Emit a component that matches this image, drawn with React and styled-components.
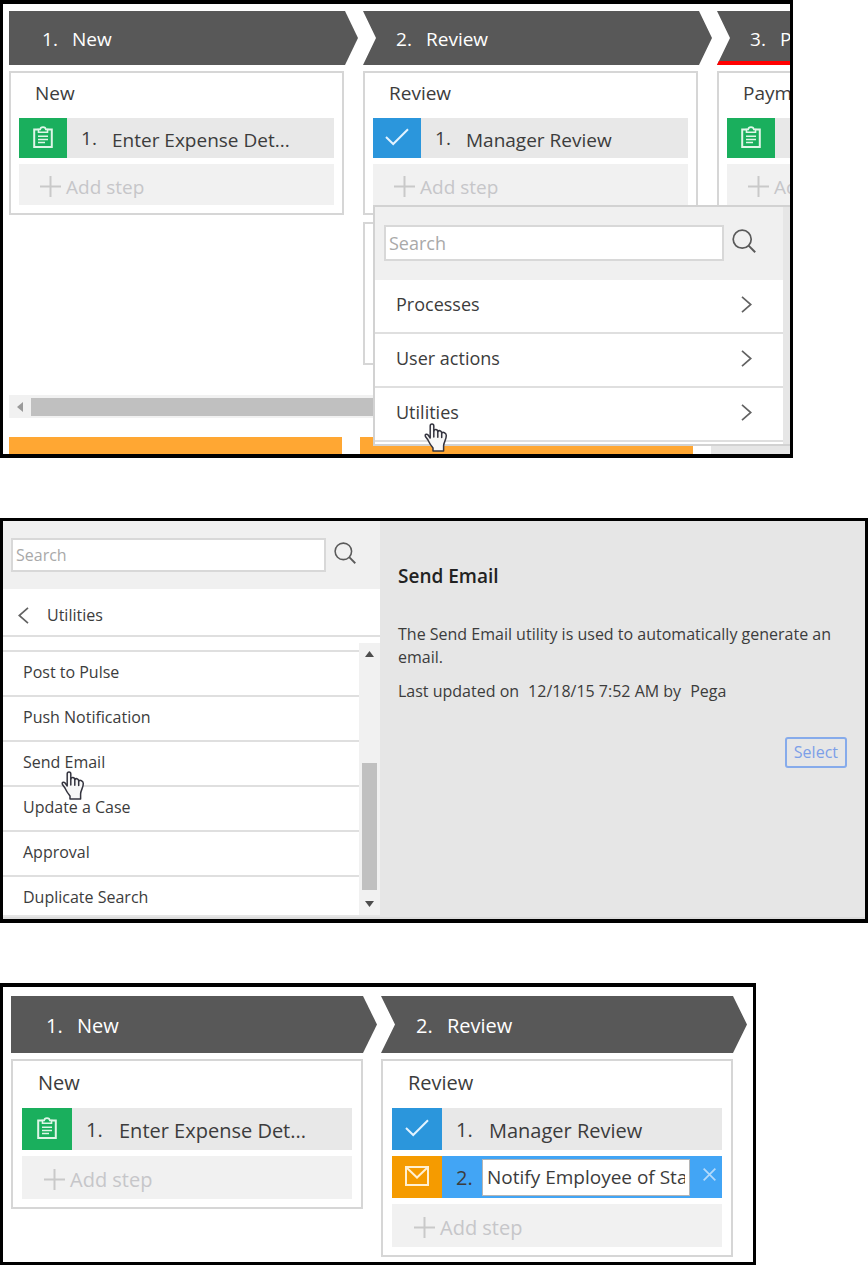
import React from "react";
import styled, { createGlobalStyle, ThemeProvider } from "styled-components";

const GlobalStyle = createGlobalStyle`
  *, *::before, *::after { box-sizing: border-box; }
  body {
    margin: 0;
    background: #fff;
    color: #3c3c3c;
    font-family: "Open Sans", "Noto Sans", sans-serif;
  }
  button, input { font: inherit; color: inherit; }
  button { margin: 0; padding: 0; border: 0; background: none; text-align: left; cursor: pointer; }
  h2, h3, p, ul, ol { margin: 0; padding: 0; font-weight: 400; }
  ul, ol { list-style: none; }
  svg { display: block; flex: none; }
`;

/* Two densities of the same stage board */
const compact = {
  font: 19, padX: 6, padY: 7, padBottom: 0, stage: 349, gap: 5, tip: 13, card: 335,
  head: 54, headPad: 33, headNum: 30, title: 45, titleLine: 41, titlePad: 16, cardPad: 8,
  icon: 48, step: 40, add: 41, stepGap: 6, numPad: 14, num: 31, addPad: 21,
};
const roomy = {
  font: 20, padX: 8, padY: 9, padBottom: 5, stage: 366, gap: 4, tip: 14, card: 352,
  head: 57, headPad: 35, headNum: 31, title: 47, titleLine: 44, titlePad: 16, cardPad: 9,
  icon: 50, step: 42, add: 43, stepGap: 6, numPad: 14, num: 33, addPad: 22,
};

const Page = styled.main`
  display: flex;
  flex-direction: column;
  gap: 60px;
`;

const Frame = styled.section`
  position: relative;
  width: 100%;
  max-width: ${(p) => p.$max || "none"};
  border: solid #000;
  border-width: ${(p) => p.$edges || "4px 3px"};
  background: #fff;
  overflow: hidden;
`;

/* ---------- stage board ---------- */

const Stages = styled.ol`
  display: flex;
  align-items: flex-start;
  gap: ${(p) => p.theme.gap}px;
  padding: ${(p) => p.theme.padY}px ${(p) => p.theme.padX}px ${(p) => p.theme.padBottom}px;
  font-size: ${(p) => p.theme.font}px;
`;

const Stage = styled.li`
  display: flex;
  flex-direction: column;
  flex: none;
  gap: 7px;
  width: ${(p) => p.theme.stage}px;
`;

const StageHead = styled.h2`
  display: flex;
  align-items: center;
  height: ${(p) => p.theme.head}px;
  margin-bottom: -1px;
  padding-left: ${(p) => p.theme.headPad}px;
  padding-top: 2px;
  background: #585858;
  color: #fff;
  font-size: inherit;
  box-shadow: ${(p) => (p.$alert ? "inset 0 -4px #f00" : "none")};
  clip-path: ${({ $notch, theme: { tip } }) =>
    `polygon(0 0, calc(100% - ${tip}px) 0, 100% 50%, calc(100% - ${tip}px) 100%, 0 100%${
      $notch ? `, ${tip}px 50%` : ""
    })`};
`;

const StageNumber = styled.span`
  width: ${(p) => p.theme.headNum}px;
`;

const Card = styled.div`
  display: flex;
  flex-direction: column;
  gap: ${(p) => p.theme.stepGap}px;
  width: ${(p) => p.theme.card}px;
  min-height: ${(p) => (p.$empty ? "143px" : "0")};
  padding: 0 ${(p) => p.theme.cardPad}px 8px;
  border: 2px solid #d6d6d6;
`;

const CardTitle = styled.h3`
  height: ${(p) => p.theme.title}px;
  margin-bottom: -${(p) => p.theme.stepGap}px;
  padding-left: ${(p) => p.theme.titlePad}px;
  font-size: inherit;
  line-height: ${(p) => p.theme.titleLine}px;
`;

const Step = styled.div`
  display: flex;
  align-items: center;
  height: ${(p) => p.theme.step}px;
  background: ${(p) => (p.$active ? "#42a5f5" : "#e8e8e8")};
`;

const StepIcon = styled.span`
  display: flex;
  align-items: center;
  justify-content: center;
  align-self: stretch;
  flex: none;
  width: ${(p) => p.theme.icon}px;
  padding-bottom: 2px;
  background: ${(p) => p.$color};
`;

const StepNumber = styled.span`
  flex: none;
  width: ${(p) => p.theme.num + p.theme.numPad}px;
  padding-left: ${(p) => p.theme.numPad}px;
`;

const StepName = styled.span`
  padding-top: 3px;
  white-space: nowrap;
`;

const StepInput = styled.input`
  flex: 1;
  min-width: 0;
  height: 37px;
  margin-left: -7px;
  padding: 0 4px;
  border: 1px solid #b5b5b5;
  border-radius: 0;
  background: #fff;
  font-size: 19px;
  outline: none;
`;

const RemoveButton = styled.button`
  display: flex;
  justify-content: center;
  width: 32px;
  padding: 0 0 5px 6px;
  flex: none;
`;

const AddStep = styled.button`
  display: flex;
  align-items: center;
  gap: 5px;
  height: ${(p) => p.theme.add}px;
  padding: 4px 0 0 ${(p) => p.theme.addPad}px;
  background: #f1f1f1;
  color: #c6c6c9;
  white-space: nowrap;
`;

/* ---------- horizontal scrollbar and lower bars ---------- */

const HScroll = styled.div`
  display: flex;
  align-items: center;
  height: 23px;
  margin: 30px 0 0 6px;
  background: #f1f1f1;
`;

const HArrow = styled.button`
  display: flex;
  justify-content: center;
  width: 22px;
`;

const HThumb = styled.div`
  flex: 1;
  height: 18px;
  background: #c0c0c0;
`;

const Bars = styled.div`
  display: flex;
  gap: 18px;
  margin: 19px 0 0 6px;
`;

const Bar = styled.div`
  flex: none;
  width: 333px;
  height: 17px;
  background: ${(p) => p.$color};
`;

/* ---------- step picker ---------- */

const Popup = styled.div`
  position: absolute;
  top: 201px;
  left: 370px;
  right: 0;
  display: flex;
  padding-right: 7px;
  border: solid #d2d2d2;
  border-width: 2px 0 2px 2px;
  background: #e6e6e6;
`;

const Menu = styled.div`
  flex: 1;
  min-width: 0;
  padding-bottom: 2px;
  background: #fff;
  font-size: 18px;
`;

const SearchBar = styled.label`
  display: flex;
  align-items: flex-start;
  gap: 8px;
  height: ${(p) => (p.$small ? 68 : 73)}px;
  padding: ${(p) => (p.$small ? "17px 24px 0 8px" : "18px 27px 0 9px")};
  background: #f0f0f0;
`;

const SearchInput = styled.input`
  flex: 1;
  min-width: 0;
  height: ${(p) => (p.$small ? 34 : 36)}px;
  padding: 0 3px;
  border: 2px solid #d8d8d8;
  border-radius: 0;
  background: #fff;
  outline: none;
  &::placeholder { color: #a9a9a9; opacity: 1; }
`;

const SearchGlyph = styled.span`
  padding-top: 4px;
`;

const MenuItem = styled.li`
  position: relative;
  border-bottom: 2px solid #dfdfdf;
`;

const MenuButton = styled.button`
  display: flex;
  align-items: center;
  justify-content: space-between;
  width: 100%;
  height: 52px;
  padding: 0 31px 4px 21px;
`;

const Pointer = styled.span`
  position: absolute;
  top: ${(p) => p.$top};
  left: ${(p) => p.$left};
  z-index: 1;
  pointer-events: none;
`;

/* ---------- utility browser ---------- */

const Browser = styled.div`
  display: flex;
  padding-bottom: 2px;
  border-bottom: 2px solid #dcdcdc;
  background: #e6e6e6;
  font-size: 16px;
`;

const Side = styled.div`
  flex: none;
  width: 377px;
  background: #fff;
`;

const BackButton = styled.button`
  display: flex;
  align-items: center;
  gap: 18px;
  width: 100%;
  height: 48px;
  padding: 6px 0 0 15px;
  border-bottom: 2px solid #dfdfdf;
`;

const ListArea = styled.div`
  display: flex;
`;

const List = styled.ul`
  flex: 1;
  padding-top: 13px;
`;

const ListItem = styled.li`
  position: relative;
  height: 45px;
  border-top: 2px solid #dfdfdf;
  &:last-child { height: 40px; }
`;

const ListButton = styled.button`
  width: 100%;
  padding-left: 20px;
  line-height: 41px;
`;

const VScroll = styled.div`
  display: flex;
  flex-direction: column;
  width: 21px;
  margin-top: 6px;
  padding: 8px 3px;
  background: #f1f1f1;
`;

const VArrow = styled.button`
  display: flex;
  justify-content: center;
`;

const VThumb = styled.div`
  height: 127px;
  margin: auto 0 11px;
  background: #c0c0c0;
`;

const Detail = styled.div`
  display: flex;
  flex-direction: column;
  flex: 1;
  padding: 42px 18px 0;
`;

const DetailTitle = styled.h2`
  margin-bottom: 34px;
  color: #222;
  font-size: 19px;
  font-weight: 600;
  line-height: 26px;
`;

const Description = styled.p`
  max-width: 450px;
  margin-bottom: 11px;
  line-height: 23px;
`;

const Updated = styled.p`
  display: flex;
  gap: 9px;
  line-height: 23px;
`;

const SelectButton = styled.button`
  align-self: flex-end;
  height: 31px;
  margin-top: 34px;
  padding: 0 7px 2px;
  border: 2px solid #86abeb;
  border-radius: 3px;
  color: #7c9fe8;
`;

/* ---------- icons ---------- */

const ClipboardIcon = () => (
  <svg width="20" height="22" viewBox="0 0 20 22" fill="none" stroke="#dff6e8" strokeWidth="2" aria-hidden="true">
    <path d="M5.5 3.5H1.2V21H18.8V3.5H14.5" />
    <path d="M5.5 6.2V3.4H7.2C7.4 .4 12.6 .4 12.8 3.4H14.5V6.2Z" strokeWidth="1.6" />
    <path d="M5 10.2H15M5 13.4H15M5 16.6H12" strokeWidth="1.5" />
  </svg>
);

const CheckIcon = () => (
  <svg width="24" height="18" viewBox="0 0 24 18" fill="none" stroke="#e3f3ff" strokeWidth="2" aria-hidden="true">
    <path d="M1 9L8.2 16L23 1.2" />
  </svg>
);

const MailIcon = () => (
  <svg width="24" height="20" viewBox="0 0 24 20" fill="none" stroke="#fff0d2" strokeWidth="2" aria-hidden="true">
    <path d="M1 1H23V19H1Z" />
    <path d="M1.500 1.500L12 11.500L22.500 1.500" />
  </svg>
);

const PlusIcon = () => (
  <svg width="21" height="21" viewBox="0 0 21 21" stroke="#c9c9c9" strokeWidth="2" aria-hidden="true">
    <path d="M10.5 0V21M0 10.5H21" />
  </svg>
);

const CloseIcon = () => (
  <svg width="13" height="13" viewBox="0 0 12 12" stroke="#b4dafb" strokeWidth="1.6" aria-hidden="true">
    <path d="M.6 .6L11.4 11.4M11.4 .6L.6 11.4" />
  </svg>
);

const SearchIcon = ({ size }) => (
  <svg width={size} height={size} viewBox="0 0 24 24" fill="none" stroke="#5a5a5a" strokeWidth="1.7" aria-hidden="true">
    <circle cx="10.2" cy="10.2" r="9" />
    <path d="M16.6 16.6L23.2 23.2" strokeWidth="2" />
  </svg>
);

const ChevronIcon = ({ back }) => (
  <svg width="11" height="17" viewBox="0 0 11 17" fill="none" stroke="#626262" strokeWidth="1.7" aria-hidden="true">
    <path d={back ? "M10 .8L1.2 8.5L10 16.2" : "M1 .8L9.8 8.5L1 16.2"} />
  </svg>
);

const ARROWS = {
  left: [6, 10, "M6 0V10L0 5Z", "#9a9a9a"],
  up: [9, 6, "M0 6L4.5 0L9 6Z", "#4d4d4d"],
  down: [9, 6, "M0 0H9L4.5 6Z", "#4d4d4d"],
};

const Arrow = ({ dir }) => {
  const [w, h, d, fill] = ARROWS[dir];
  return (
    <svg width={w} height={h} viewBox={`0 0 ${w} ${h}`} aria-hidden="true">
      <path d={d} fill={fill} />
    </svg>
  );
};

const HandIcon = () => (
  <svg width="24" height="29" viewBox="0 0 24 29" fill="none" stroke="#34343f" strokeWidth="1.5" strokeLinejoin="round" strokeLinecap="round" aria-hidden="true">
    <path
      fill="#f7f7f7"
      d="M6.2 15V3C6.2 .2 9.8 .2 9.8 3V8C10.6 5.8 13.6 6.2 13.8 8.6C14.8 7 17.4 7.4 17.7 10C19 8.6 22.3 9.8 22.3 12.5C22.3 17 19.7 19 19.6 23V28H9V25C6.6 22 5.5 20.5 4.2 17.5C3.5 15.8 1.6 14.4 1.2 12.8C1 11.2 2.8 10.7 4 11.9Z"
    />
    <path d="M9.8 8V14M13.8 8.6V14.2M17.7 10V14.6" />
  </svg>
);

/* ---------- parts ---------- */

const STEP_KINDS = {
  form: { color: "#1aaf5d", Icon: ClipboardIcon },
  approve: { color: "#2b96dc", Icon: CheckIcon },
  email: { color: "#f59b00", Icon: MailIcon },
};

function StepRow({ kind, number, name, editing }) {
  const { color, Icon } = STEP_KINDS[kind];
  return (
    <Step $active={editing}>
      <StepIcon $color={color}><Icon /></StepIcon>
      <StepNumber>{number}.</StepNumber>
      {editing ? (
        <>
          <StepInput aria-label="Step name" defaultValue={name} />
          <RemoveButton type="button" aria-label="Remove step"><CloseIcon /></RemoveButton>
        </>
      ) : (
        <StepName>{name}</StepName>
      )}
    </Step>
  );
}

function StageColumn({ number, name, steps, alert, spare }) {
  return (
    <Stage>
      <StageHead $notch={number > 1} $alert={alert}>
        <StageNumber>{number}.</StageNumber>
        {name}
      </StageHead>
      <Card>
        <CardTitle>{name}</CardTitle>
        {steps.map((s, i) => <StepRow key={s.name} number={i + 1} {...s} />)}
        <AddStep type="button"><PlusIcon />Add step</AddStep>
      </Card>
      {spare && <Card $empty />}
    </Stage>
  );
}

const enterStep = { kind: "form", name: "Enter Expense Det..." };
const reviewStep = { kind: "approve", name: "Manager Review" };
const notifyStep = { kind: "email", name: "Notify Employee of Status", editing: true };

const CATEGORIES = ["Processes", "User actions", "Utilities"];
const UTILITIES = ["Post to Pulse", "Push Notification", "Send Email", "Update a Case", "Approval", "Duplicate Search"];

export default function App() {
  return (
    <Page>
      <GlobalStyle />

      <Frame $max="793px">
        <ThemeProvider theme={compact}>
          <Stages>
            <StageColumn number={1} name="New" steps={[enterStep]} />
            <StageColumn number={2} name="Review" steps={[reviewStep]} spare />
            <StageColumn number={3} name="Payment" steps={[{ kind: "form", name: "" }]} alert />
          </Stages>
        </ThemeProvider>
        <HScroll>
          <HArrow type="button" aria-label="Scroll left"><Arrow dir="left" /></HArrow>
          <HThumb />
        </HScroll>
        <Bars>
          <Bar $color="#ffa733" />
          <Bar $color="#ffa733" />
          <Bar $color="#e6e6e6" />
        </Bars>
        <Popup>
          <Menu>
            <SearchBar>
              <SearchInput type="text" placeholder="Search" aria-label="Search steps" />
              <SearchGlyph><SearchIcon size={24} /></SearchGlyph>
            </SearchBar>
            <ul>
              {CATEGORIES.map((c) => (
                <MenuItem key={c}>
                  <MenuButton type="button">{c}<ChevronIcon /></MenuButton>
                  {c === "Utilities" && <Pointer $top="35px" $left="49px"><HandIcon /></Pointer>}
                </MenuItem>
              ))}
            </ul>
          </Menu>
        </Popup>
      </Frame>

      <Frame $edges="3px 3px 4px">
        <Browser>
          <Side>
            <SearchBar $small>
              <SearchInput $small type="text" placeholder="Search" aria-label="Search utilities" />
              <SearchGlyph><SearchIcon size={22} /></SearchGlyph>
            </SearchBar>
            <BackButton type="button"><ChevronIcon back />Utilities</BackButton>
            <ListArea>
              <List>
                {UTILITIES.map((u) => (
                  <ListItem key={u}>
                    <ListButton type="button">{u}</ListButton>
                    {u === "Send Email" && <Pointer $top="29px" $left="58px"><HandIcon /></Pointer>}
                  </ListItem>
                ))}
              </List>
              <VScroll>
                <VArrow type="button" aria-label="Scroll up"><Arrow dir="up" /></VArrow>
                <VThumb />
                <VArrow type="button" aria-label="Scroll down"><Arrow dir="down" /></VArrow>
              </VScroll>
            </ListArea>
          </Side>
          <Detail>
            <DetailTitle>Send Email</DetailTitle>
            <Description>The Send Email utility is used to automatically generate an email.</Description>
            <Updated>
              <span>Last updated on</span>
              <span>12/18/15 7:52 AM by</span>
              <span>Pega</span>
            </Updated>
            <SelectButton type="button">Select</SelectButton>
          </Detail>
        </Browser>
      </Frame>

      <Frame $max="756px" $edges="4px 3px">
        <ThemeProvider theme={roomy}>
          <Stages>
            <StageColumn number={1} name="New" steps={[enterStep]} />
            <StageColumn number={2} name="Review" steps={[reviewStep, notifyStep]} />
          </Stages>
        </ThemeProvider>
      </Frame>
    </Page>
  );
}
